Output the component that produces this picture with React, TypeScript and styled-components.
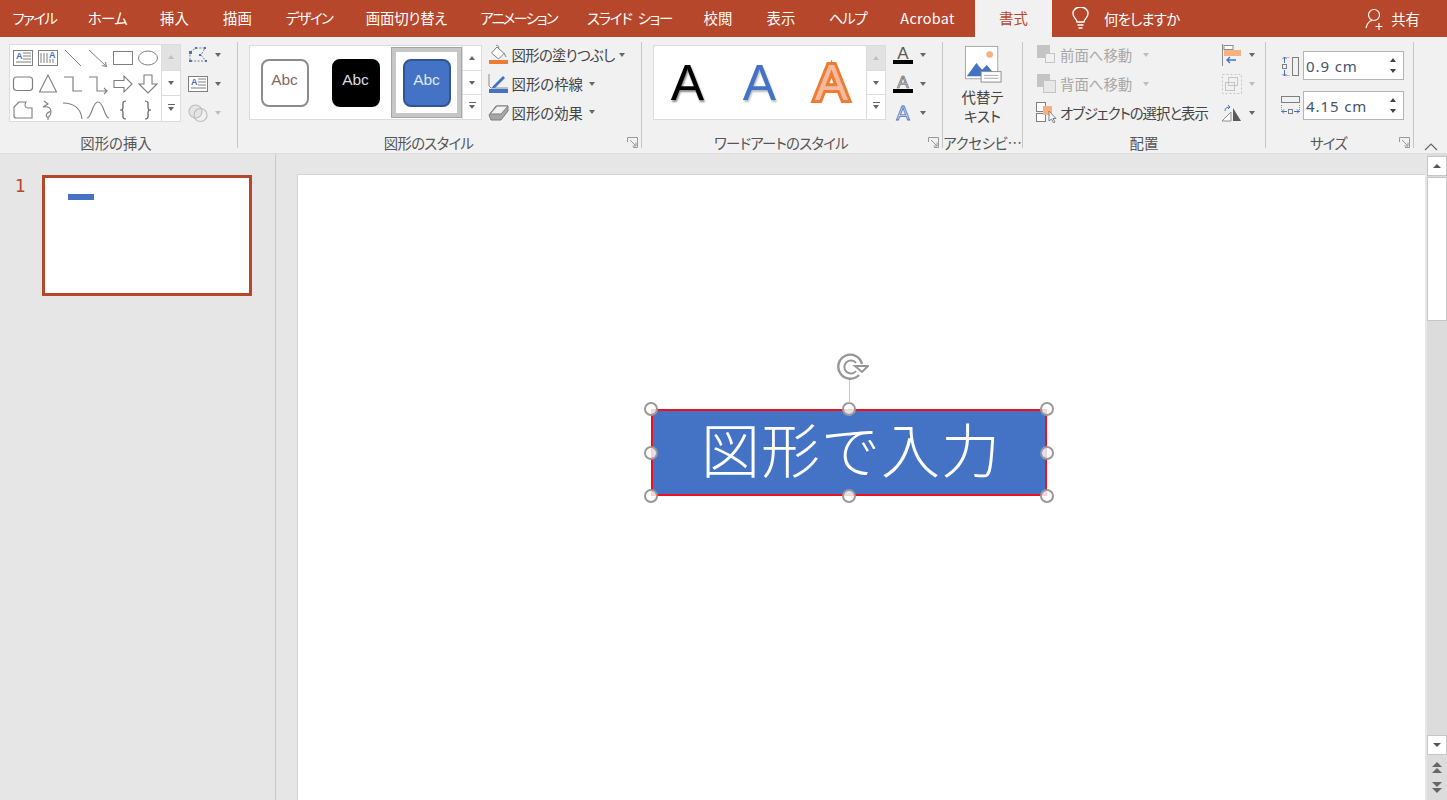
import React from 'react';
import styled, { createGlobalStyle } from 'styled-components';

const GlobalStyle = createGlobalStyle`
  html, body {
    margin: 0;
    height: 100%;
    overflow: hidden;
    background: #e6e6e6;
  }
  body {
    font-family: "Noto Sans CJK JP", "Noto Sans", sans-serif;
    font-size: 14.4px;
    font-feature-settings: "palt";
  }
`;

const tabs: [string, number, number][] = [
  ['ファイル', 69, -1.5],
  ['ホーム', 77, -0.6],
  ['挿入', 57, 0],
  ['描画', 69, 0],
  ['デザイン', 74, -1.5],
  ['画面切り替え', 121, -0.2],
  ['アニメーション', 103, -1.9],
  ['スライド ショー', 119, -1.2],
  ['校閲', 58, 0],
  ['表示', 68, 0],
  ['ヘルプ', 65, -1.3],
  ['Acrobat', 95, 0.3],
];

const gray = '#7f7f7f';

const shapePaths: React.ReactNode[] = [
  <g key="a">
    <rect x="2.5" y="4.5" width="19" height="15" fill="#fff" stroke={gray} />
    <text x="5" y="13" fontSize="9" fontWeight="700" fill="#4472c4" fontFamily="Liberation Sans">A</text>
    <path d="M12 7h8M12 10h8M12 13h8M5 16h15" stroke={gray} />
  </g>,
  <g key="b">
    <rect x="2.5" y="4.5" width="19" height="15" fill="#fff" stroke={gray} />
    <text x="13" y="12" fontSize="9" fontWeight="700" fill="#4472c4" fontFamily="Liberation Sans">A</text>
    <path d="M5 7v10M8 7v10M11 7v10M14 13v4M17 13v4" stroke={gray} />
  </g>,
  <path key="c" d="M4 4l16 16" stroke={gray} fill="none" />,
  <g key="d">
    <path d="M3 4l17 16" stroke={gray} fill="none" />
    <path d="M16 19.5l4.5 1-1-4.5" fill="none" stroke={gray} />
  </g>,
  <rect key="e" x="2.5" y="5.5" width="19" height="13" fill="none" stroke={gray} />,
  <ellipse key="f" cx="12" cy="12" rx="9.5" ry="7" fill="none" stroke={gray} />,
  <rect key="g" x="2.5" y="5" width="19" height="13.5" rx="3" fill="none" stroke={gray} strokeWidth="1.2" />,
  <path key="h" d="M12 3l8.5 17h-17z" fill="none" stroke={gray} strokeWidth="1.1" />,
  <path key="i" d="M3 5h9v14h9" fill="none" stroke={gray} strokeWidth="1.2" />,
  <path key="j" d="M3 5h8v14h10M18 16l3 3-3 3" fill="none" stroke={gray} strokeWidth="1.1" />,
  <path key="k" d="M3 8.5h10V4l8 8-8 8v-4.5H3z" fill="none" stroke={gray} strokeWidth="1.1" />,
  <path key="l" d="M8 3h8v9h5l-9 9-9-9h5z" fill="none" stroke={gray} strokeWidth="1.1" />,
  <path key="m" d="M3 9l5-5h7c-2 3-1 6 2 6h4v10H5q-2 0-2-2z" fill="none" stroke={gray} strokeWidth="1.1" />,
  <path key="n" d="M8 3l4 3-5 3c5-1 8 1 8 4 0 4-2 7-4 6s0-6 4-5M12 22v-3" fill="none" stroke={gray} strokeWidth="1.1" />,
  <path key="o" d="M2 5c10 0 18 5 19 16" fill="none" stroke={gray} strokeWidth="1.1" />,
  <path key="p" d="M1 20C6 20 6 4 12 4s6 16 11 16" fill="none" stroke={gray} strokeWidth="1.1" />,
  <path key="q" d="M15 3c-4 0-3 3-3 6s-1 3-3 3c2 0 3 0 3 3s-1 6 3 6" fill="none" stroke="#595959" strokeWidth="1.2" />,
  <path key="r" d="M9 3c4 0 3 3 3 6s1 3 3 3c-2 0-3 0-3 3s1 6-3 6" fill="none" stroke="#595959" strokeWidth="1.2" />,
];

const handles: [number, number][] = [
  [0, 0],
  [50, 0],
  [100, 0],
  [0, 50],
  [100, 50],
  [0, 100],
  [50, 100],
  [100, 100],
];

const Page = styled.div`
  width: 1447px;
  height: 800px;
  display: flex;
  flex-direction: column;
  overflow: hidden;
  color: #444;
`;

const TitleBar = styled.div`
  height: 37px;
  flex: none;
  display: flex;
  align-items: stretch;
  background: #b7472a;
  color: #fff;
`;

const Tab = styled.div<{ $w: number; $ls?: number }>`
  width: ${(p) => p.$w}px;
  text-align: center;
  line-height: 36px;
  white-space: nowrap;
  word-spacing: 4px;
  letter-spacing: ${(p) => p.$ls ?? 0}px;
`;

const ActiveTab = styled(Tab)`
  background: #f1f1f1;
  color: #b7472a;
`;

const Search = styled.div`
  display: flex;
  align-items: center;
  gap: 15px;
  margin-left: 20px;
  letter-spacing: -0.8px;
`;

const Share = styled.div`
  display: flex;
  align-items: center;
  gap: 6px;
  margin-left: auto;
  padding-right: 27px;
`;

const Ribbon = styled.div`
  height: 117px;
  flex: none;
  box-sizing: border-box;
  display: flex;
  padding-top: 5px;
  background: #f1f1f1;
  border-bottom: 1px solid #dcdcdc;
  position: relative;
`;

const Group = styled.div<{ $w: number }>`
  width: ${(p) => p.$w}px;
  height: 106px;
  flex: none;
  box-sizing: border-box;
  display: flex;
  flex-direction: column;
  border-right: 1px solid #c6c6c6;
  position: relative;
`;

const GroupBody = styled.div<{ $pl?: number }>`
  flex: 1;
  min-height: 0;
  display: flex;
  align-items: flex-start;
  padding-left: ${(p) => p.$pl ?? 0}px;
`;

const GroupLabel = styled.div<{ $pr?: number; $ls?: number }>`
  height: 16px;
  margin-bottom: -3px;
  padding-right: ${(p) => p.$pr ?? 0}px;
  line-height: 16px;
  text-align: center;
  white-space: nowrap;
  color: #555;
  letter-spacing: ${(p) => p.$ls ?? 0}px;
`;

const Launcher = styled.svg`
  position: absolute;
  right: 3px;
  bottom: 0;
  width: 11px;
  height: 11px;
`;

const Gallery = styled.div<{ $w: number; $top: number; $h: number }>`
  width: ${(p) => p.$w}px;
  height: ${(p) => p.$h}px;
  margin-top: ${(p) => p.$top}px;
  flex: none;
  box-sizing: border-box;
  display: flex;
  background: #fff;
  border: 1px solid #dcdcdc;
`;

const ShapeGrid = styled.div`
  width: 152px;
  display: grid;
  grid-template-columns: repeat(6, 25.1px);
  grid-template-rows: repeat(3, 26px);
`;

const ShapeCell = styled.svg`
  width: 24px;
  height: 24px;
  margin: 1px 0 0 1px;
`;

const GalleryItems = styled.div`
  flex: 1;
  display: flex;
  align-items: center;
  margin-left: -1px;
`;

const ScrollCol = styled.div`
  width: 19px;
  flex: none;
  display: flex;
  flex-direction: column;
  margin-left: auto;
`;

const ScrollBtn = styled.div<{ $off?: boolean }>`
  flex: 1;
  display: flex;
  align-items: center;
  justify-content: center;
  box-sizing: border-box;
  border-left: 1px solid #dcdcdc;
  border-bottom: 1px solid #dcdcdc;
  background: ${(p) => (p.$off ? '#e2e2e2' : '#fff')};
  &:last-child {
    border-bottom: 0;
  }
`;

const Caret = styled.span<{ $up?: boolean; $color?: string; $s?: number }>`
  display: block;
  width: 0;
  height: 0;
  flex: none;
  border-left: ${(p) => p.$s ?? 3.5}px solid transparent;
  border-right: ${(p) => p.$s ?? 3.5}px solid transparent;
  ${(p) =>
    p.$up
      ? `border-bottom: ${p.$s ?? 4}px solid ${p.$color ?? '#666'};`
      : `border-top: ${p.$s ?? 4}px solid ${p.$color ?? '#666'};`}
`;

const MoreCaret = styled(Caret)`
  position: relative;
  &::before {
    content: '';
    position: absolute;
    top: -7px;
    left: -3.5px;
    width: 7px;
    height: 1px;
    background: #666;
  }
`;

const AbcSlot = styled.div<{ $selected?: boolean }>`
  width: 71px;
  height: 71px;
  box-sizing: border-box;
  flex: none;
  display: flex;
  align-items: center;
  justify-content: center;
  ${(p) => (p.$selected ? 'background: #fff; border: 1px solid #a6a6a6; outline: 4px solid #c6c6c6; outline-offset: -5px;' : '')}
`;

const AbcShape = styled.div<{ $bg: string; $fg: string; $line: string }>`
  width: 48px;
  height: 48px;
  box-sizing: border-box;
  border-radius: 8px;
  border: 2px solid ${(p) => p.$line};
  background: ${(p) => p.$bg};
  color: ${(p) => p.$fg};
  font-family: "Liberation Sans", sans-serif;
  font-size: 15.5px;
  text-align: center;
  line-height: 38px;
`;

const Commands = styled.div<{ $ml?: number; $w?: number }>`
  display: flex;
  flex-direction: column;
  margin-top: -1.5px;
  margin-left: ${(p) => p.$ml ?? 0}px;
  ${(p) => (p.$w ? `width: ${p.$w}px;` : '')}
`;

const Command = styled.div<{ $off?: boolean; $ls?: number }>`
  height: 28.7px;
  display: flex;
  align-items: center;
  white-space: nowrap;
  color: ${(p) => (p.$off ? '#a6a6a6' : '#444')};
  letter-spacing: ${(p) => p.$ls ?? 0}px;
`;

const CommandIcon = styled.svg`
  width: 21px;
  height: 21px;
  flex: none;
  margin-right: 3px;
`;

const CommandCaret = styled(Caret)<{ $gap: number }>`
  margin-left: ${(p) => p.$gap}px;
`;

const WordArtRow = styled.div`
  flex: 1;
  display: flex;
  align-items: center;
  padding-left: 14px;
  gap: 33px;
`;

const WordArt = styled.span<{ $fill: string; $stroke?: string; $shadow?: string }>`
  width: 39px;
  text-align: center;
  font-family: "Liberation Sans", sans-serif;
  font-size: 50px;
  line-height: 60px;
  color: ${(p) => p.$fill};
  ${(p) => (p.$stroke ? `-webkit-text-stroke: 6px ${p.$stroke}; paint-order: stroke fill;` : '')}
  ${(p) => (p.$shadow ? `text-shadow: ${p.$shadow};` : '')}
`;

const ToolCol = styled.div<{ $ml: number }>`
  display: flex;
  flex-direction: column;
  margin-top: -1px;
  margin-left: ${(p) => p.$ml}px;
`;

const ToolRow = styled.div`
  height: 28.7px;
  display: flex;
  align-items: center;
  gap: 6px;
`;

const ToolIcon = styled.svg`
  width: 22px;
  height: 22px;
  flex: none;
`;

const AltColumn = styled.div`
  width: 100%;
  display: flex;
  flex-direction: column;
  align-items: center;
  padding-top: 3px;
  box-sizing: border-box;
  line-height: 19px;
`;

const AltIcon = styled.svg`
  width: 38px;
  height: 38px;
  margin-bottom: 4px;
`;

const SizeCol = styled.div`
  display: flex;
  flex-direction: column;
  gap: 11px;
  padding-top: 9px;
`;

const SizeRow = styled.div`
  display: flex;
  align-items: center;
  gap: 3px;
`;

const SizeIcon = styled.svg`
  width: 20px;
  height: 24px;
  flex: none;
`;

const SizeInput = styled.div`
  width: 101px;
  height: 29px;
  box-sizing: border-box;
  display: flex;
  align-items: center;
  justify-content: space-between;
  padding: 0 7px 0 2px;
  background: #fff;
  border: 1px solid #b4b4b4;
  color: #44546a;
  font-family: "Noto Sans", sans-serif;
  font-size: 15px;
  letter-spacing: 0.9px;
`;

const Spin = styled.div`
  display: flex;
  flex-direction: column;
  gap: 7px;
`;

const Collapse = styled.svg`
  position: absolute;
  right: 9px;
  bottom: 2px;
  width: 14px;
  height: 9px;
`;

const Main = styled.div`
  flex: 1;
  min-height: 0;
  display: flex;
`;

const SlidePane = styled.div`
  width: 276px;
  flex: none;
  box-sizing: border-box;
  display: flex;
  align-items: flex-start;
  padding: 21px 0 0 15px;
  border-right: 1px solid #c9c9c9;
  background: #e6e6e6;
`;

const SlideNumber = styled.div`
  width: 27px;
  margin-top: 1px;
  color: #b7472a;
  font-family: "DejaVu Sans", sans-serif;
  font-size: 17px;
  line-height: 20px;
`;

const Thumb = styled.div`
  width: 210px;
  height: 121px;
  box-sizing: border-box;
  background: #fff;
  border: 3px solid #b7472a;
  position: relative;
`;

const ThumbShape = styled.div`
  position: absolute;
  left: 23px;
  top: 16px;
  width: 26px;
  height: 6px;
  background: #4472c4;
`;

const Canvas = styled.div`
  flex: 1;
  min-width: 0;
  padding: 20px 0 0 21px;
  overflow: hidden;
  background: #e6e6e6;
`;

const Slide = styled.div`
  width: 1128px;
  height: 800px;
  box-sizing: border-box;
  background: #fff;
  border-top: 1px solid #d4d4d4;
  border-left: 1px solid #d4d4d4;
  position: relative;
`;

const Shape = styled.div`
  position: absolute;
  left: 353px;
  top: 234px;
  width: 396px;
  height: 87px;
  box-sizing: border-box;
  display: flex;
  align-items: center;
  justify-content: center;
  padding: 0 0 10px 4px;
  background: #4472c4;
  box-shadow: inset 0 0 0 2px #f00f1c;
  color: #fff;
  font-size: 59px;
  font-weight: 300;
  font-feature-settings: normal;
  letter-spacing: 1px;
`;

const Handle = styled.span<{ $x: number; $y: number }>`
  position: absolute;
  left: ${(p) => p.$x}%;
  top: ${(p) => p.$y}%;
  width: 14px;
  height: 14px;
  box-sizing: border-box;
  margin: -7px 0 0 -7px;
  border-radius: 50%;
  border: 2.5px solid #999;
  background: rgba(255, 255, 255, 0.8);
`;

const RotateLine = styled.span`
  position: absolute;
  left: 50%;
  top: -30px;
  height: 24px;
  width: 1px;
  background: #c8c8c8;
`;

const RotateIcon = styled.svg`
  position: absolute;
  left: calc(50% - 13px);
  top: -56px;
  width: 33px;
  height: 30px;
`;

const ScrollBar = styled.div`
  width: 20px;
  flex: none;
  display: flex;
  flex-direction: column;
  padding-top: 2px;
  box-sizing: border-box;
  background: #dcdcdc;
`;

const ScrollArrow = styled.div`
  height: 20px;
  flex: none;
  box-sizing: border-box;
  display: flex;
  align-items: center;
  justify-content: center;
  background: #fff;
  border: 1px solid #c6c6c6;
`;

const ScrollThumb = styled.div`
  height: 144px;
  flex: none;
  box-sizing: border-box;
  margin-top: 1px;
  background: #fff;
  border: 1px solid #c6c6c6;
`;

const ScrollTrack = styled.div`
  flex: 1;
`;

const PageNav = styled.div`
  height: 45px;
  flex: none;
  display: flex;
  flex-direction: column;
  align-items: center;
  justify-content: space-around;
  padding: 2px 0;
  box-sizing: border-box;
`;

const DoubleCaret = styled.div`
  display: flex;
  flex-direction: column;
  gap: 1px;
`;

const LauncherIcon = () => (
  <Launcher viewBox="0 0 11 11" fill="none" stroke="#999">
    <path d="M.5 5V.5h10v10H6" />
    <path d="M3 3l6 6M9 5.5V9H5.5" />
  </Launcher>
);

const Scroller = ({ off }: { off?: boolean }) => (
  <ScrollCol>
    <ScrollBtn $off={off}>
      <Caret $up $color={off ? '#c0c0c0' : '#666'} />
    </ScrollBtn>
    <ScrollBtn>
      <Caret />
    </ScrollBtn>
    <ScrollBtn>
      <MoreCaret />
    </ScrollBtn>
  </ScrollCol>
);

export default function App() {
  return (
    <Page>
      <GlobalStyle />
      <TitleBar>
        {tabs.map(([label, w, ls]) => (
          <Tab key={label} $w={w} $ls={ls}>
            {label}
          </Tab>
        ))}
        <ActiveTab $w={77}>書式</ActiveTab>
        <Search>
          <svg width="17" height="24" viewBox="0 0 17 24" fill="none" stroke="#fff" strokeWidth="1.4">
            <path d="M5 15c0-3-4-4-4-8.500a7.500 6.500 0 0 1 15 0C16 11 12 12 12 15z" />
            <path d="M5.500 18h6M6.500 21h4" />
          </svg>
          <span>何をしますか</span>
        </Search>
        <Share>
          <svg width="20" height="22" viewBox="0 0 20 22" fill="none" stroke="#fff" strokeWidth="1.200">
            <circle cx="9" cy="7" r="5.500" />
            <path d="M1 20c1-4 3-7 6-7.500M14 15v7M10.500 18.500h7" />
          </svg>
          <span>共有</span>
        </Share>
      </TitleBar>

      <Ribbon>
        <Group $w={238}>
          <GroupBody $pl={9}>
            <Gallery $w={172} $top={2} $h={78}>
              <ShapeGrid>
                {shapePaths.map((s, i) => (
                  <ShapeCell key={i} viewBox="0 0 24 24">
                    {s}
                  </ShapeCell>
                ))}
              </ShapeGrid>
              <Scroller off />
            </Gallery>
            <ToolCol $ml={6}>
              <ToolRow>
                <ToolIcon viewBox="0 0 22 22" fill="none">
                  <path d="M3 8l6-4h9l-4 7 5 6H3z" stroke="#7f7f7f" strokeDasharray="2 1.500" />
                  <path d="M2 7h3v3H2zM8 3h2v2H8zM17 3h2v2h-2zM12 10h2v2h-2zM18 16h2v2h-2zM2 16h3v2H2z" fill="#4472c4" />
                </ToolIcon>
                <Caret />
              </ToolRow>
              <ToolRow>
                <ToolIcon viewBox="0 0 22 22">
                  <rect x="1.500" y="3.500" width="19" height="15" fill="#fff" stroke="#7f7f7f" />
                  <text x="4" y="12" fontSize="9" fontWeight="700" fill="#4472c4" fontFamily="Liberation Sans">A</text>
                  <path d="M11 6h8M11 9h8M11 12h8M4 15h15" stroke="#7f7f7f" />
                </ToolIcon>
                <Caret />
              </ToolRow>
              <ToolRow>
                <ToolIcon viewBox="0 0 22 22" fill="none" stroke="#bdbdbd" strokeWidth="1.200">
                  <circle cx="8.500" cy="9.500" r="6.500" fill="#e4e4e4" />
                  <circle cx="13.500" cy="13" r="6.500" />
                </ToolIcon>
                <Caret $color="#bdbdbd" />
              </ToolRow>
            </ToolCol>
          </GroupBody>
          <GroupLabel $pr={5}>図形の挿入</GroupLabel>
        </Group>

        <Group $w={404}>
          <GroupBody $pl={11}>
            <Gallery $w={233} $top={3} $h={75}>
              <GalleryItems>
                <AbcSlot>
                  <AbcShape $bg="#fff" $fg="#7f6a6a" $line="#8c8c8c">Abc</AbcShape>
                </AbcSlot>
                <AbcSlot>
                  <AbcShape $bg="#000" $fg="#d9d9e6" $line="#000">Abc</AbcShape>
                </AbcSlot>
                <AbcSlot $selected>
                  <AbcShape $bg="#4472c4" $fg="#dfe6f3" $line="#2f5597">Abc</AbcShape>
                </AbcSlot>
              </GalleryItems>
              <Scroller />
            </Gallery>
            <Commands $ml={5.5}>
              <Command $ls={-0.7}>
                <CommandIcon viewBox="0 0 21 21">
                  <path d="M8 1.500c2-1 3 1 2.500 3" fill="none" stroke="#7f7f7f" />
                  <path d="M9 3l7 6.500-5.500 5.500-7-6z" fill="#fff" stroke="#7f7f7f" />
                  <path d="M16 9l2 4" stroke="#7f7f7f" />
                  <rect x="1" y="16" width="19" height="4" fill="#ed7d31" />
                </CommandIcon>
                図形の塗りつぶし
                <CommandCaret $gap={5} />
              </Command>
              <Command>
                <CommandIcon viewBox="0 0 21 21">
                  <path d="M1 1v12l2 2h17" fill="none" stroke="#8c8c8c" />
                  <path d="M5 13l10-10 2 2L7 15H4z" fill="#4472c4" />
                  <rect x="1" y="16" width="19" height="4" fill="#4472c4" />
                </CommandIcon>
                図形の枠線
                <CommandCaret $gap={6} />
              </Command>
              <Command>
                <CommandIcon viewBox="0 0 21 21">
                  <path d="M1 13L8 4h12v5l-7 9H3z" fill="#a6a6a6" stroke="#7f7f7f" />
                  <path d="M2 12l7-8h11l-7 8z" fill="#f2f2f2" stroke="#7f7f7f" />
                </CommandIcon>
                図形の効果
                <CommandCaret $gap={6} />
              </Command>
            </Commands>
          </GroupBody>
          <GroupLabel $pr={22} $ls={-0.7}>図形のスタイル</GroupLabel>
          <LauncherIcon />
        </Group>

        <Group $w={301}>
          <GroupBody $pl={11}>
            <Gallery $w={233} $top={3} $h={75}>
              <WordArtRow>
                <WordArt $fill="#000" $shadow="1px 2px 2px #888">A</WordArt>
                <WordArt $fill="#4472c4" $shadow="1px 2px 2px #bbb">A</WordArt>
                <WordArt $fill="#f7b9a2" $stroke="#ed7d31">A</WordArt>
              </WordArtRow>
              <Scroller off />
            </Gallery>
            <ToolCol $ml={6}>
              <ToolRow>
                <ToolIcon viewBox="0 0 22 22">
                  <text x="11" y="15" textAnchor="middle" fontSize="17" fill="#595959" fontFamily="Liberation Sans">A</text>
                  <rect x="1" y="16" width="20" height="4" fill="#000" />
                </ToolIcon>
                <Caret />
              </ToolRow>
              <ToolRow>
                <ToolIcon viewBox="0 0 22 22">
                  <text x="11" y="15" textAnchor="middle" fontSize="17" fill="#fff" stroke="#595959" strokeWidth=".7" fontFamily="Liberation Sans">A</text>
                  <rect x="1" y="16" width="20" height="4" fill="#000" />
                </ToolIcon>
                <Caret />
              </ToolRow>
              <ToolRow>
                <ToolIcon viewBox="0 0 22 22">
                  <text x="11" y="18" textAnchor="middle" fontSize="20" fill="#dbe5f5" stroke="#4472c4" strokeWidth=".8" fontFamily="Liberation Sans">A</text>
                </ToolIcon>
                <Caret />
              </ToolRow>
            </ToolCol>
          </GroupBody>
          <GroupLabel $pr={22} $ls={-0.7}>ワードアートのスタイル</GroupLabel>
          <LauncherIcon />
        </Group>

        <Group $w={80}>
          <GroupBody>
            <AltColumn>
              <AltIcon viewBox="0 0 40 40">
                <rect x="1.500" y="1.500" width="34" height="34" fill="#fff" stroke="#a6a6a6" />
                <circle cx="27" cy="10" r="3.500" fill="#f4b183" />
                <path d="M3 33l10-14 6 7 5-5 10 12z" fill="#4472c4" />
                <rect x="18" y="28" width="21" height="11" fill="#fff" stroke="#8c8c8c" />
                <path d="M21 32h15M21 35h15" stroke="#a6a6a6" />
              </AltIcon>
              <span>代替テ</span>
              <span>キスト</span>
            </AltColumn>
          </GroupBody>
          <GroupLabel $ls={-0.3}>アクセシビ…</GroupLabel>
        </Group>

        <Group $w={243}>
          <GroupBody $pl={13}>
            <Commands $w={172}>
              <Command $off>
                <CommandIcon viewBox="0 0 21 21">
                  <rect x="1" y="1" width="13" height="13" fill="#c4c4c4" />
                  <rect x="9.500" y="9.500" width="9" height="9" fill="#f1f1f1" stroke="#c4c4c4" />
                </CommandIcon>
                前面へ移動
                <CommandCaret $gap={11} $color="#bdbdbd" />
              </Command>
              <Command $off>
                <CommandIcon viewBox="0 0 21 21">
                  <rect x="1" y="1" width="13" height="13" fill="#c4c4c4" />
                  <rect x="7.500" y="7.500" width="12" height="12" fill="#e8e8e8" stroke="#c4c4c4" />
                </CommandIcon>
                背面へ移動
                <CommandCaret $gap={11} $color="#bdbdbd" />
              </Command>
              <Command $ls={-1}>
                <CommandIcon viewBox="0 0 21 21">
                  <rect x=".500" y=".500" width="9" height="9" fill="#fff" stroke="#7f7f7f" />
                  <rect x=".500" y="11.500" width="9" height="8" fill="#fff" stroke="#7f7f7f" />
                  <rect x="7" y="4" width="9" height="9" fill="#f4b183" />
                  <path d="M13 9v10l2.500-2 2 4 1.500-1-2-3.500h3z" fill="#fff" stroke="#7f7f7f" />
                </CommandIcon>
                オブジェクトの選択と表示
              </Command>
            </Commands>
            <ToolCol $ml={13}>
              <ToolRow>
                <ToolIcon viewBox="0 0 22 22">
                  <path d="M1.500 0v22" stroke="#8c8c8c" />
                  <rect x="3" y="1.500" width="9" height="4" fill="#fff" stroke="#8c8c8c" />
                  <rect x="3" y="6" width="17" height="6" fill="#f4b183" />
                  <path d="M15 16H6M9 13l-3 3 3 3" fill="none" stroke="#4472c4" strokeWidth="1.400" />
                </ToolIcon>
                <Caret />
              </ToolRow>
              <ToolRow>
                <ToolIcon viewBox="0 0 22 22" fill="none" stroke="#c4c4c4">
                  <path d="M1.500 1.500h19v19h-19z" strokeDasharray="2 2" />
                  <rect x="7.500" y="4.500" width="9" height="8" />
                  <rect x="4.500" y="9.500" width="9" height="8" />
                </ToolIcon>
                <Caret $color="#bdbdbd" />
              </ToolRow>
              <ToolRow>
                <ToolIcon viewBox="0 0 22 22">
                  <path d="M1 19l9-9v9z" fill="#fff" stroke="#8c8c8c" />
                  <path d="M12 6l8 13h-8z" fill="#595959" />
                  <path d="M4 9c0-3 2-4 5-4M7 3l2 2-2 2" fill="none" stroke="#4472c4" />
                </ToolIcon>
                <Caret />
              </ToolRow>
            </ToolCol>
          </GroupBody>
          <GroupLabel>配置</GroupLabel>
        </Group>

        <Group $w={148}>
          <GroupBody $pl={14}>
            <SizeCol>
              <SizeRow>
                <SizeIcon viewBox="0 0 20 24" fill="none">
                  <rect x="12.500" y="3.500" width="6" height="18" stroke="#7f7f7f" />
                  <path d="M9.500 3.500h-6M9.500 21.500h-6" stroke="#8c8c8c" strokeDasharray="1 1" />
                  <rect x="2.500" y="10.500" width="4" height="4" stroke="#7f7f7f" />
                  <path d="M4.500 3v6M4.500 16v6M2.500 5l2-2 2 2M2.500 20l2 2 2-2" stroke="#4472c4" />
                </SizeIcon>
                <SizeInput>
                  0.9 cm
                  <Spin>
                    <Caret $up $color="#444" />
                    <Caret $color="#444" />
                  </Spin>
                </SizeInput>
              </SizeRow>
              <SizeRow>
                <SizeIcon viewBox="0 0 20 24" fill="none">
                  <rect x="1.500" y="2.500" width="18" height="6" stroke="#7f7f7f" />
                  <path d="M1.500 11v8M19.500 11v8" stroke="#8c8c8c" strokeDasharray="1 1" />
                  <rect x="8.500" y="15.500" width="4" height="4" stroke="#7f7f7f" />
                  <path d="M2 17.500h5M14 17.500h5M4 15.500l-2 2 2 2M17 15.500l2 2-2 2" stroke="#4472c4" />
                </SizeIcon>
                <SizeInput>
                  4.15 cm
                  <Spin>
                    <Caret $up $color="#444" />
                    <Caret $color="#444" />
                  </Spin>
                </SizeInput>
              </SizeRow>
            </SizeCol>
          </GroupBody>
          <GroupLabel $pr={22} $ls={-0.8}>サイズ</GroupLabel>
          <LauncherIcon />
        </Group>
        <Collapse viewBox="0 0 14 9" fill="none" stroke="#666" strokeWidth="1.200">
          <path d="M1 8l6-6 6 6" />
        </Collapse>
      </Ribbon>

      <Main>
        <SlidePane>
          <SlideNumber>1</SlideNumber>
          <Thumb>
            <ThumbShape />
          </Thumb>
        </SlidePane>
        <Canvas>
          <Slide>
            <Shape>
              図形で入力
              {handles.map(([x, y]) => (
                <Handle key={`${x}-${y}`} $x={x} $y={y} />
              ))}
              <RotateLine />
              <RotateIcon viewBox="0 0 33 30" fill="none" stroke="#979797" strokeWidth="2">
                <path d="M23 22a12 12 0 1 1 3-11" strokeWidth="2.400" />
                <path d="M20 18a6.500 6.500 0 1 1 0-8" />
                <path d="M19 13h13l-6 6z" fill="#fff" />
              </RotateIcon>
            </Shape>
          </Slide>
        </Canvas>
        <ScrollBar>
          <ScrollArrow>
            <Caret $up $s={4} $color="#555" />
          </ScrollArrow>
          <ScrollThumb />
          <ScrollTrack />
          <ScrollArrow>
            <Caret $s={4} $color="#555" />
          </ScrollArrow>
          <PageNav>
            <DoubleCaret>
              <Caret $up $s={5} $color="#666" />
              <Caret $up $s={5} $color="#666" />
            </DoubleCaret>
            <DoubleCaret>
              <Caret $s={5} $color="#666" />
              <Caret $s={5} $color="#666" />
            </DoubleCaret>
          </PageNav>
        </ScrollBar>
      </Main>
    </Page>
  );
}
